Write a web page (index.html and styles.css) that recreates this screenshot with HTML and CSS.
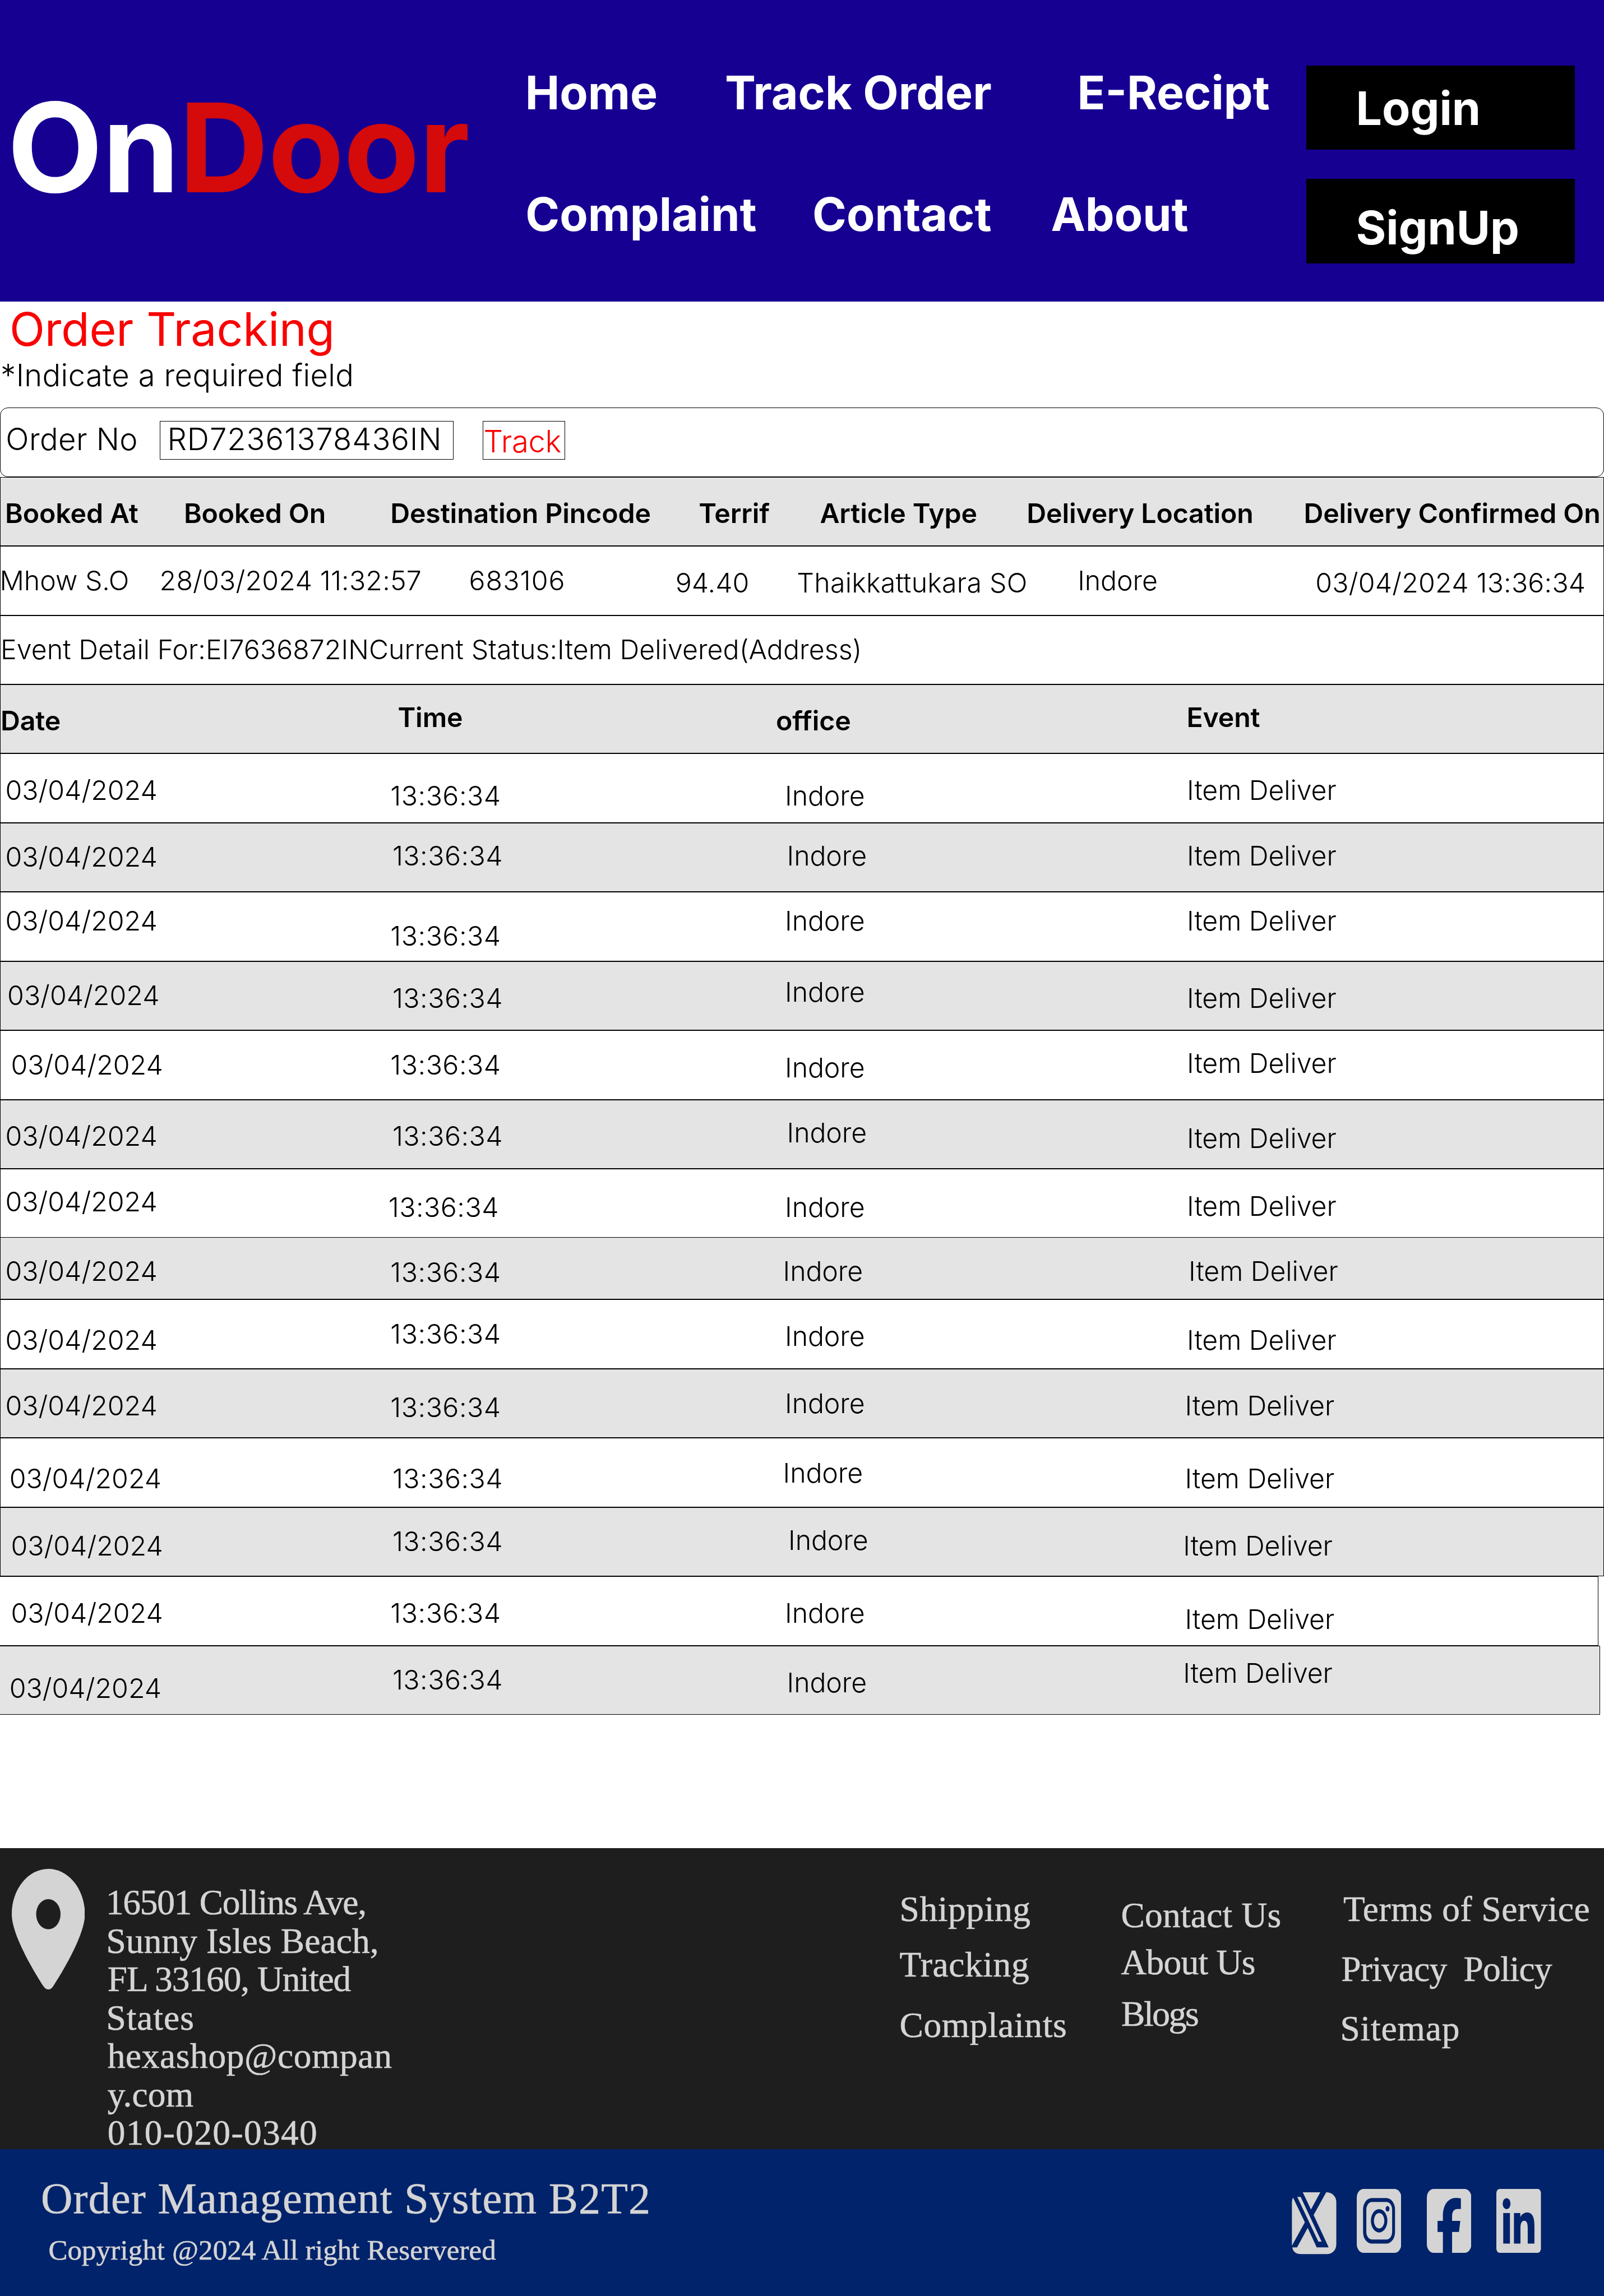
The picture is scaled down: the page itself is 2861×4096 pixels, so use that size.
FILE: index.html
```html
<!DOCTYPE html>
<html lang="en">
<head>
<meta charset="utf-8">
<title>OnDoor - Order Tracking</title>
<link rel="stylesheet" href="styles.css">
</head>
<body>
<header class="header">
  <div class="logo"><span>On</span><span class="logo-red">Door</span></div>
  <nav class="nav">
    <div class="nav-row nav-top"><a>Home</a><a>Track Order</a><a>E-Recipt</a></div>
    <div class="nav-row nav-bottom"><a>Complaint</a><a>Contact</a><a>About</a></div>
  </nav>
  <div class="auth">
    <a class="auth-btn">Login</a>
    <a class="auth-btn signup">SignUp</a>
  </div>
</header>

<main class="main">
  <h1 class="title">Order Tracking</h1>
  <p class="hint">*Indicate a required field</p>

  <form class="search">
    <label class="search-label">Order No</label>
    <div class="search-input">RD72361378436IN</div>
    <div class="search-btn">Track</div>
  </form>

  <section class="table">
    <div class="row shaded head summary-head">
      <span>Booked At</span><span>Booked On</span><span>Destination Pincode</span><span>Terrif</span><span>Article Type</span><span>Delivery Location</span><span>Delivery Confirmed On</span>
    </div>
    <div class="row summary">
      <span>Mhow S.O</span><span class="stamp">28/03/2024 11:32:57</span><span class="pin-code">683106</span><span class="low">94.40</span><span class="low thai">Thaikkattukara SO</span><span class="office-name">Indore</span><span class="low stamp">03/04/2024 13:36:34</span>
    </div>
    <div class="row detail"><span>Event Detail For:EI7636872INCurrent Status:Item Delivered(Address)</span></div>
    <div class="row shaded head event-head"><span>Date</span><span class="up">Time</span><span>office</span><span class="up">Event</span></div>

    <div class="row event e1"><span class="date">03/04/2024</span><span class="time">13:36:34</span><span class="office">Indore</span><span class="item">Item Deliver</span></div>
    <div class="row event shaded e2"><span class="date">03/04/2024</span><span class="time">13:36:34</span><span class="office">Indore</span><span class="item">Item Deliver</span></div>
    <div class="row event e3"><span class="date">03/04/2024</span><span class="time">13:36:34</span><span class="office">Indore</span><span class="item">Item Deliver</span></div>
    <div class="row event shaded e4"><span class="date">03/04/2024</span><span class="time">13:36:34</span><span class="office">Indore</span><span class="item">Item Deliver</span></div>
    <div class="row event e5"><span class="date">03/04/2024</span><span class="time">13:36:34</span><span class="office">Indore</span><span class="item">Item Deliver</span></div>
    <div class="row event shaded e6"><span class="date">03/04/2024</span><span class="time">13:36:34</span><span class="office">Indore</span><span class="item">Item Deliver</span></div>
    <div class="row event e7"><span class="date">03/04/2024</span><span class="time">13:36:34</span><span class="office">Indore</span><span class="item">Item Deliver</span></div>
    <div class="row event shaded e8"><span class="date">03/04/2024</span><span class="time">13:36:34</span><span class="office">Indore</span><span class="item">Item Deliver</span></div>
    <div class="row event e9"><span class="date">03/04/2024</span><span class="time">13:36:34</span><span class="office">Indore</span><span class="item">Item Deliver</span></div>
    <div class="row event shaded e10"><span class="date">03/04/2024</span><span class="time">13:36:34</span><span class="office">Indore</span><span class="item">Item Deliver</span></div>
    <div class="row event e11"><span class="date">03/04/2024</span><span class="time">13:36:34</span><span class="office">Indore</span><span class="item">Item Deliver</span></div>
    <div class="row event shaded e12"><span class="date">03/04/2024</span><span class="time">13:36:34</span><span class="office">Indore</span><span class="item">Item Deliver</span></div>
    <div class="row event e13"><span class="date">03/04/2024</span><span class="time">13:36:34</span><span class="office">Indore</span><span class="item">Item Deliver</span></div>
    <div class="row event shaded e14"><span class="date">03/04/2024</span><span class="time">13:36:34</span><span class="office">Indore</span><span class="item">Item Deliver</span></div>
  </section>
</main>

<footer class="footer">
  <div class="footer-main">
    <svg class="pin" viewBox="0 0 384 512" preserveAspectRatio="none"><path fill-rule="evenodd" d="M215.700 499.200C267 435 384 279.400 384 192C384 86 298 0 192 0S0 86 0 192c0 87.400 117 243 168.300 307.200c12.300 15.300 35.100 15.300 47.400 0zM192 128a64 64 0 1 1 0 128a64 64 0 1 1 0-128z"/></svg>
    <address class="address">
      <span class="a1">16501 Collins Ave,</span>
      <span class="a2">Sunny Isles Beach,</span>
      <span class="a3">FL 33160, United</span>
      <span class="a4">States</span>
      <span class="a5">hexashop@compan</span>
      <span class="a6">y.com</span>
      <span class="a7">010-020-0340</span>
    </address>
    <div class="links links-1"><a>Shipping</a><a>Tracking</a><a>Complaints</a></div>
    <div class="links links-2"><a>Contact Us</a><a>About Us</a><a>Blogs</a></div>
    <div class="links links-3"><a>Terms of Service</a><a>Privacy&nbsp; Policy</a><a>Sitemap</a></div>
  </div>
  <div class="footer-bar">
    <div class="legal">
      <div class="system">Order Management System B2T2</div>
      <div class="copyright">Copyright @2024 All right Reservered</div>
    </div>
    <div class="social">
      <svg class="icon-x" viewBox="118 213 234 402" preserveAspectRatio="none"><path d="M299 213C330 213 352 240 352 275V552C352 590 330 615 303 615H168C140 615 124 597 121 571H146L202 444L249 571H312L233 361ZM125 248L187 408L119 560V275Q120 258 125 248ZM176 213H268L219 325ZM147 243H165L275 534H258Z"/></svg>
      <svg class="icon-ig" viewBox="457 188 233 415" preserveAspectRatio="none"><rect x="457" y="188" width="233" height="415" rx="36" ry="56"/><rect class="cut" x="490" y="247" width="167" height="296" rx="46" ry="74"/><rect x="507" y="273" width="135" height="244" rx="30" ry="50"/><ellipse class="cut" cx="574" cy="395" rx="43" ry="76"/><ellipse cx="574" cy="395" rx="27.500" ry="50"/><ellipse class="cut" cx="618" cy="317" rx="10" ry="18"/></svg>
      <svg class="icon-fb" viewBox="823 188 233 415" preserveAspectRatio="none"><rect x="823" y="188" width="233" height="415" rx="36" ry="56"/><path class="cut" d="M907 604V468H879V396H907V365C907 290 935 246 975 246Q990 246 1001 250V318H985C965 318 955 335 955 365V396H998L991 468H955V604Z"/></svg>
      <svg class="icon-in" viewBox="1188 188 233 415" preserveAspectRatio="none"><rect x="1188" y="188" width="233" height="415" rx="17" ry="28"/><ellipse class="cut" cx="1241.500" cy="284" rx="20.500" ry="36"/><path class="cut" d="M1224 345H1259V543H1224ZM1280 345H1313V372C1320 352 1335 341 1348 341C1380 341 1387 380 1387 430V543H1352V445C1352 415 1348 395 1334 395C1318 395 1314 418 1314 445V543H1280Z"/></svg>
    </div>
  </div>
</footer>
</body>
</html>
```
FILE: styles.css
```css
* { box-sizing: border-box; }

body {
  margin: 0;
  width: 2861px;
  height: 4096px;
  overflow: hidden;
  display: flex;
  flex-direction: column;
  background: #fff;
  color: #000;
  font-family: Inter, "Liberation Sans", sans-serif;
  line-height: 1;
  white-space: nowrap;
}

/* Header */
.header {
  display: flex;
  align-items: flex-start;
  flex: none;
  height: 538.4px;
  background: #160092;
  color: #fff;
  font-weight: 700;
  font-size: 82.33px;
}
.logo { width: 936.8px; padding: 152.5px 0 0 13.2px; font-size: 220.6px; letter-spacing: -.5px; }
.logo-red { color: #d50a0a; }
.nav { display: flex; flex-direction: column; gap: 133.9px; width: 1393.4px; padding-top: 124.3px; }
.nav-row { display: grid; }
.nav-top { grid-template-columns: 356.3px 628.3px auto; }
.nav-bottom { grid-template-columns: 511.7px 425.4px auto; padding-left: .5px; }
.auth { display: flex; flex-direction: column; gap: 52px; padding-top: 116.7px; }
.auth-btn { width: 478.8px; height: 150.6px; padding: 35px 0 0 88.2px; background: #000; }
.signup { padding-top: 45.3px; }

/* Order search */
.main { flex: none; height: 2758.7px; }
.title {
  margin: 0;
  padding: 8px 0 0 17px;
  font-size: 82.33px;
  font-weight: 400;
  letter-spacing: -.16px;
  color: #f90303;
}
.hint {
  margin: 13.4px 0 0;
  padding-left: 1.1px;
  font-size: 54.3px;
  font-weight: 300;
  letter-spacing: .37px;
}
.search {
  display: flex;
  align-items: flex-start;
  height: 123.8px;
  margin-top: 30.6px;
  border: 1px solid #000;
  border-radius: 14px;
  font-size: 54.3px;
  font-weight: 300;
}
.search-label { width: 284px; padding: 28px 0 0 9.3px; letter-spacing: .44px; }
.search-input {
  width: 524.4px;
  height: 69px;
  margin-top: 23px;
  padding: 4px 0 0 12.4px;
  border: 1px solid #000;
  letter-spacing: 1px;
}
.search-btn {
  width: 147px;
  height: 69px;
  margin: 23px 0 0 52.1px;
  padding-top: 8px;
  border: 1px solid #000;
  letter-spacing: -.26px;
  color: #f90303;
}

/* Tracking table */
.row {
  display: grid;
  align-items: start;
  height: 123.43px;
  border: 1px solid #000;
  font-size: 48.25px;
  font-weight: 300;
}
.shaded { background: #e4e4e4; }
.head { font-weight: 600; letter-spacing: -.12px; }
.summary-head {
  grid-template-columns: 318.8px 368.3px 550.1px 216.1px 368.9px 494.2px auto;
  padding: 40.2px 0 0 8.1px;
}
.summary {
  grid-template-columns: 285.2px 551.9px 368.3px 216.5px 501px 424px auto;
  padding-top: 37.2px;
}
.summary > span { margin-left: -1.6px; }
.low { padding-top: 3.1px; }
.stamp { letter-spacing: .2px; }
.pin-code { letter-spacing: 1.1px; }
.thai { letter-spacing: .26px; }
.detail { padding-top: 36.8px; letter-spacing: .06px; }
.event-head { grid-template-columns: 708.4px 674.5px 732.5px auto; padding-top: 33.5px; }
.event-head > span { padding-top: 6.7px; }
.event-head > .up { padding-top: 0; }

.event {
  grid-template-columns: 686.9px 703.8px 716.9px auto;
  padding: 1.1px 0 0 8.4px;
}
.date { margin: var(--d) 0 0 var(--dx, 0); }
.time { margin: var(--t) 0 0 var(--tx, 0); letter-spacing: .5px; }
.office { margin: var(--o) 0 0 var(--ox, 0); letter-spacing: -.1px; }
.office-name { letter-spacing: -.1px; }
.item { margin: var(--i) 0 0 var(--ix, 0); letter-spacing: -.07px; }

.e1 { --d: 39.4px; --t: 49.6px; --o: 49.6px; --i: 39.4px; }
.e2 { --d: 35.4px; --t: 32.6px; --o: 32.6px; --i: 32.6px; --tx: 3.6px; --ox: 3.5px; }
.e3 { --d: 25.9px; --t: 52.7px; --o: 25.9px; --i: 25.9px; }
.e4 { --d: 35.5px; --t: 39.9px; --o: 29.5px; --i: 39.9px; --dx: 3.7px; --tx: 3.6px; }
.e5 { --d: 36px; --t: 36px; --o: 40.3px; --i: 33.1px; --dx: 10px; }
.e6 { --d: 39.3px; --t: 39.3px; --o: 33.1px; --i: 43.6px; --tx: 3.6px; --ox: 3.5px; }
.e7 { --d: 32.4px; --t: 43.2px; --o: 43.2px; --i: 40.5px; --tx: -3.6px; }
.e8 { --d: 34.1px; --t: 36.8px; --o: 34.1px; --i: 34.1px; --ox: -3.5px; --ix: 3px; }
.e9 { --d: 46.4px; --t: 35.8px; --o: 39.4px; --i: 46.4px; }
.e10 { --d: 39.8px; --t: 42.7px; --o: 36.1px; --i: 39.8px; --ix: -3.4px; }
.e11 { --d: 46.3px; --t: 46.3px; --o: 36.8px; --i: 46.3px; --dx: 7.3px; --tx: 3.6px; --ox: -3.5px; --ix: -3.4px; }
.e12 { --d: 43px; --t: 35.7px; --o: 33.6px; --i: 43px; --dx: 10px; --tx: 3.6px; --ox: 6px; --ix: -6.8px; }
.e13 { --d: 39.4px; --t: 39.4px; --o: 39.4px; --i: 50.3px; --dx: 10px; --ix: -3.4px; }
.e14 { --d: 50.4px; --t: 35.8px; --o: 40.5px; --i: 23.2px; --dx: 7.3px; --tx: 3.6px; --ox: 3.5px; --ix: -6.8px; }
.e8 { height: 110px; border-top: 0; }
.e13, .e14 { border-left: 0; padding-left: 9.4px; }
.e13 { width: 2850.5px; }
.e14 { width: 2853.8px; }

/* Footer */
.footer {
  flex: none;
  color: #d4d4d4;
  fill: #d4d4d4;
  font-family: "Liberation Serif", serif;
  -webkit-text-stroke: .6px #d4d4d4;
}
.footer-main {
  display: flex;
  align-items: flex-start;
  height: 537px;
  background: #1e1e1e;
  font-size: 63.4px;
}
.pin { width: 130.5px; height: 215.7px; margin: 37.1px 0 0 20.8px; }
.address {
  display: flex;
  flex-direction: column;
  width: 1453.2px;
  padding: 63px 0 0 40.4px;
  font-style: normal;
  line-height: 68.5px;
}
.a1 { letter-spacing: -1.26px; margin-left: -2.8px; }
.a2 { letter-spacing: .12px; margin-left: -2.2px; }
.a3 { letter-spacing: -1.04px; }
.a4 { letter-spacing: .99px; margin-left: -2.2px; }
.a5 { letter-spacing: .62px; }
.a6 { letter-spacing: .19px; }
.a7 { letter-spacing: 1.35px; }
.links { display: flex; flex-direction: column; }
.links-1 { width: 395px; padding-top: 78.2px; letter-spacing: .65px; }
.links-2 { width: 392px; padding-top: 88.5px; }
.links-3 { padding-top: 78.2px; }
.links-1 a:nth-child(2) { margin-top: 35.8px; }
.links-1 a:nth-child(3) { margin-top: 43.7px; }
.links-2 a:nth-child(1) { letter-spacing: .26px; }
.links-2 a:nth-child(2) { margin-top: 20.8px; letter-spacing: -.7px; }
.links-2 a:nth-child(3) { margin: 28.6px 0 0 .5px; letter-spacing: -2.3px; }
.links-3 a:nth-child(1) { margin-left: 4.5px; letter-spacing: .5px; }
.links-3 a:nth-child(2) { margin: 43.2px 0 0 .8px; letter-spacing: -.79px; }
.links-3 a:nth-child(3) { margin: 42.8px 0 0 -1px; letter-spacing: .85px; }

.footer-bar { display: flex; align-items: flex-start; height: 262px; background: #00236b; }
.legal { width: 2304.2px; padding: 49.2px 0 0 73px; }
.system { font-size: 78.2px; letter-spacing: 1.1px; }
.copyright { margin: 27.7px 0 0 13.4px; font-size: 51px; letter-spacing: .1px; }
.social { display: flex; align-items: flex-start; gap: 45.2px; padding-top: 70.6px; }
.social svg { width: 79.5px; height: 113.9px; }
.social .icon-x { height: 110.3px; margin: 6.8px -9px 0 0; }
.social .cut { fill: #00236b; }
```
